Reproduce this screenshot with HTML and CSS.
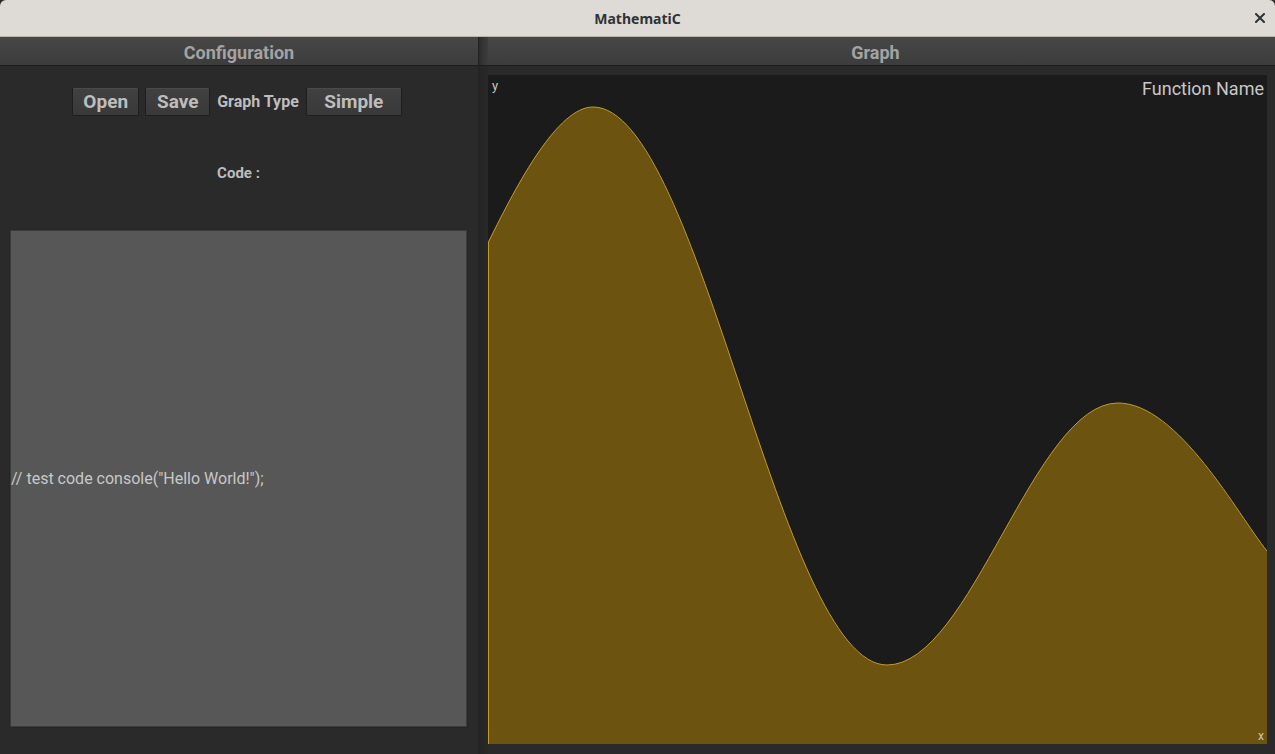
FILE: index.html
```html
<!DOCTYPE html>
<html>
<head>
<meta charset="utf-8">
<link rel="stylesheet" href="styles.css">
</head>
<body>
<div class="window">
  <div class="titlebar">
    <span class="title">MathematiC</span>
    <span class="close">
      <svg width="10" height="10" viewBox="0 0 10 10"><path d="M1 1 L9 9 M9 1 L1 9" stroke="#2e3436" stroke-width="2" stroke-linecap="square"/></svg>
    </span>
  </div>
  <div class="main">
    <div class="panel left">
      <div class="header">Configuration</div>
      <div class="config">
        <div class="toolbar">
          <button class="btn btn-open">Open</button>
          <button class="btn btn-save">Save</button>
          <span class="label">Graph Type</span>
          <button class="btn btn-simple">Simple</button>
        </div>
        <div class="code-label">Code :</div>
        <div class="editor"><span class="code">// test code console("Hello World!");</span></div>
      </div>
    </div>
    <div class="separator"><div class="sep-head"></div></div>
    <div class="panel right">
      <div class="header header-graph">Graph</div>
      <div class="graph-wrap">
        <div class="graph">
          <svg class="plot" viewBox="0 0 779 669" preserveAspectRatio="none">
            <path d="M0 669 L0 167 C30 107 70 32 105 32 C212 32 292 590 399 590 C483 590 546 328 630 328 C690 328 750 440 779 476 L779 669 Z" fill="#6c5310"/>
            <path d="M0.5 669 L0.5 167 C30 107 70 32 105 32 C212 32 292 590 399 590 C483 590 546 328 630 328 C690 328 750 440 779 476" fill="none" stroke="#c39a2a" stroke-width="1" vector-effect="non-scaling-stroke"/>
          </svg>
          <span class="axis-y">y</span>
          <span class="fname">Function Name</span>
          <span class="axis-x">x</span>
        </div>
      </div>
    </div>
  </div>
</div>
</body>
</html>
```

FILE: styles.css
```css
* { box-sizing: border-box; }
html, body { margin: 0; padding: 0; }
body {
  width: 1275px;
  height: 754px;
  overflow: hidden;
  background: #2a2a2a;
  font-family: Roboto, "Liberation Sans", sans-serif;
}
.window {
  display: flex;
  flex-direction: column;
  height: 754px;
}
.titlebar {
  position: relative;
  height: 37px;
  background: #dedbd7;
  border-bottom: 1px solid #bbb4ac;
  border-radius: 6px 6px 0 0;
  display: flex;
  align-items: center;
  justify-content: center;
}
.title {
  font-family: "Noto Sans", "DejaVu Sans", sans-serif;
  font-weight: bold;
  font-size: 14px;
  color: #2e3436;
}
.close {
  position: absolute;
  right: 10px;
  top: 13px;
  width: 10px;
  height: 10px;
  display: flex;
}
.main {
  flex: 1;
  display: flex;
  min-height: 0;
}
.panel {
  display: flex;
  flex-direction: column;
  background: #2a2a2a;
}
.left { width: 478px; }
.right { flex: 1; }
.header {
  height: 29px;
  background: linear-gradient(#474747, #3c3c3c);
  border-bottom: 1px solid #1c1c1c;
  color: #a3a3a3;
  font-weight: bold;
  font-size: 18px;
  display: flex;
  align-items: center;
  justify-content: center;
  padding-top: 3px;
}
.header-graph { padding-right: 12px; }
.separator {
  width: 10px;
  background: linear-gradient(90deg, #222 0, #262626 3px, #282828 100%);
  display: flex;
  flex-direction: column;
}
.sep-head {
  height: 29px;
  background: linear-gradient(90deg, #2a2a2a 0, #333 3px, #3c3c3c 100%);
  border-left: 1px solid #232323;
  border-bottom: 1px solid #1c1c1c;
}
.config {
  flex: 1;
  display: flex;
  flex-direction: column;
  align-items: center;
  padding: 21px 11px 27px 10px;
}
.toolbar {
  display: flex;
  align-items: center;
  gap: 6px;
  height: 29px;
  margin-left: -3px;
}
.btn {
  height: 29px;
  background: linear-gradient(#414141, #393939);
  border: 1px solid #1e1e1e;
  border-top-color: #2a2a2a;
  box-shadow: inset 0 1px 0 #4a4a4a;
  border-radius: 2px;
  color: #bdbdbd;
  font-family: Roboto, "Liberation Sans", sans-serif;
  font-weight: bold;
  font-size: 19px;
  padding: 0 9px;
  line-height: 27px;
}
.btn-open { width: 67px; }
.btn-save { width: 65px; }
.btn-simple { width: 96px; }
.label {
  color: #bdbdbd;
  font-weight: bold;
  font-size: 16px;
  padding: 0 1px;
}
.code-label {
  margin-top: 48px;
  color: #bdbdbd;
  font-weight: bold;
  font-size: 15px;
  height: 18px;
  line-height: 18px;
}
.editor {
  margin-top: 48px;
  align-self: stretch;
  flex: 1;
  background: #575757;
  border: 1px solid #3c3c3c;
  box-shadow: 0 0 0 1px #262626;
  display: flex;
  align-items: center;
}
.code {
  color: #c8c8c8;
  font-size: 16px;
  margin-top: 0;
}
.graph-wrap {
  flex: 1;
  padding: 9px 8px 10px 0;
  display: flex;
}
.graph {
  position: relative;
  flex: 1;
  background: #1b1b1b;
  overflow: hidden;
}
.plot {
  position: absolute;
  left: 0;
  top: 0;
  width: 100%;
  height: 100%;
  display: block;
}
.axis-y {
  position: absolute;
  left: 4px;
  top: 3px;
  color: #c8c8c8;
  font-size: 13px;
}
.fname {
  position: absolute;
  right: 3px;
  top: 3px;
  color: #c8c8c8;
  font-size: 18px;
}
.axis-x {
  position: absolute;
  right: 3px;
  bottom: 1px;
  color: #c8c8c8;
  font-size: 12px;
}
```
